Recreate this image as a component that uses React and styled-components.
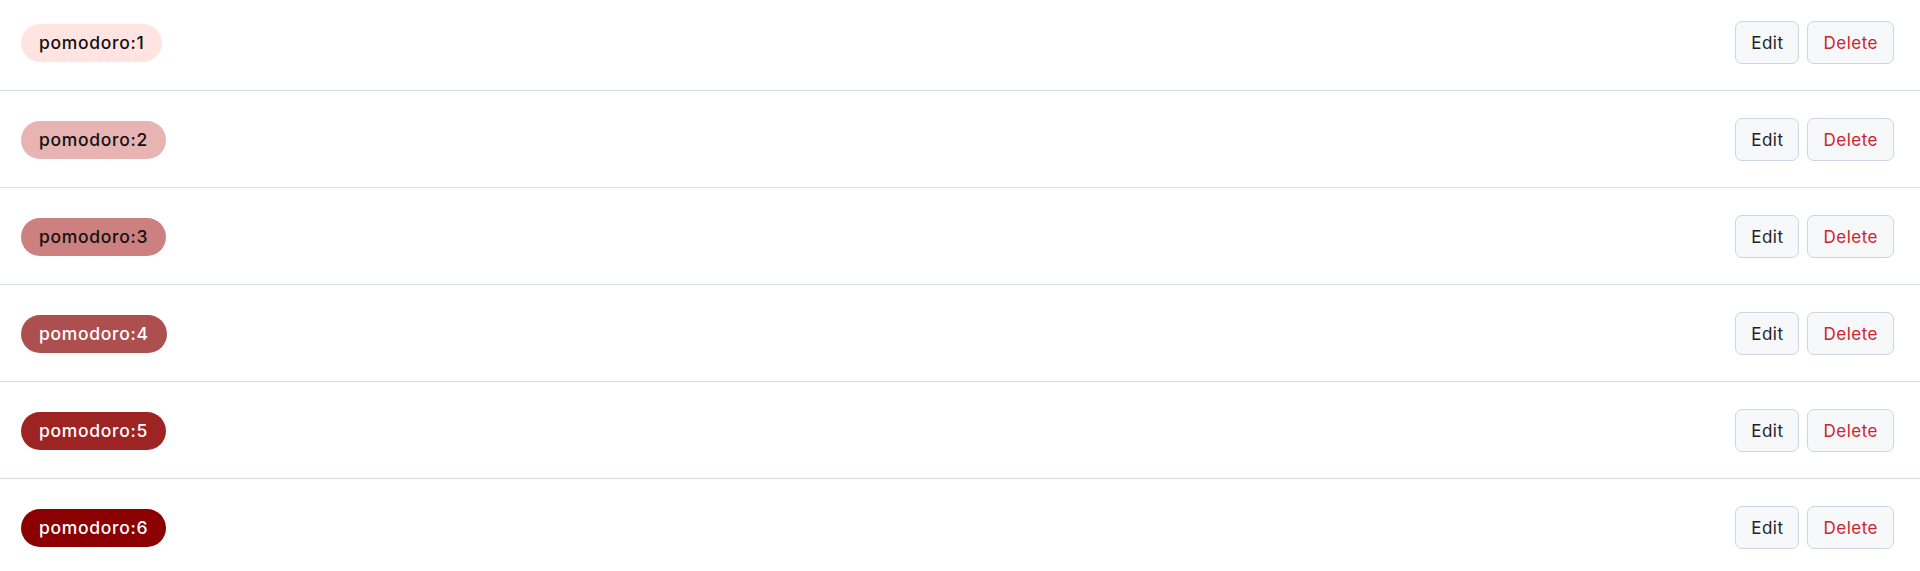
import React from 'react';
import styled, { createGlobalStyle } from 'styled-components';

const tags = [
    { name: 'pomodoro:1', color: '#ffe4e2', text: '#111' },
    { name: 'pomodoro:2', color: '#e7b3b3', text: '#111' },
    { name: 'pomodoro:3', color: '#cc8080', text: '#111' },
    { name: 'pomodoro:4', color: '#ad4f4f', text: '#fff' },
    { name: 'pomodoro:5', color: '#9e2424', text: '#fff' },
    { name: 'pomodoro:6', color: '#8b0000', text: '#fff' },
];

function App() {
    return (
        <>
            <GlobalStyle />
            <List>
                {tags.map((tag) => (
                    <Row key={tag.name}>
                        <Pill bg={tag.color} fg={tag.text}>{tag.name}</Pill>
                        <Actions>
                            <Button>Edit</Button>
                            <Button danger>Delete</Button>
                        </Actions>
                    </Row>
                ))}
            </List>
        </>
    );
}

const GlobalStyle = createGlobalStyle`
    body {
        margin: 0;
        background: #fff;
        font-family: Inter, "Noto Sans", "Liberation Sans", sans-serif;
        overflow: hidden;
    }
`;

const List = styled.div`
    display: flex;
    flex-direction: column;
    margin-top: -6px;
`;

const Row = styled.div`
    display: flex;
    align-items: center;
    justify-content: space-between;
    padding: 27px 26px 26px 21px;
    border-bottom: 1px solid #d8dee4;
`;

const Pill = styled.span`
    display: inline-flex;
    align-items: center;
    height: 38px;
    padding: 0 18px;
    border-radius: 19px;
    background-color: ${props => props.bg};
    color: ${props => props.fg};
    font-size: 17.5px;
    font-weight: 500;
    letter-spacing: 0.7px;
    box-sizing: border-box;
`;

const Actions = styled.div`
    display: flex;
    gap: 8px;
`;

const Button = styled.button`
    height: 43px;
    padding: 0 15px;
    border: 1px solid #ccd6e0;
    border-radius: 7px;
    background-color: #f6f8fa;
    color: ${props => props.danger ? '#cf222e' : '#1f2328'};
    font-family: inherit;
    font-size: 17px;
    font-weight: 400;
    letter-spacing: 0.5px;
    cursor: pointer;
`;

export default App;
